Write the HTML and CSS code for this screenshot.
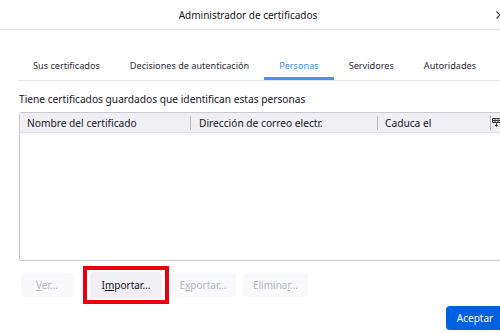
FILE: index.html
```html
<!DOCTYPE html>
<html lang="es">
<head>
<meta charset="utf-8">
<link rel="stylesheet" href="styles.css">
</head>
<body>
<div class="dialog">
  <header class="titlebar">
    <span class="title">Administrador de certificados</span>
    <svg class="close" width="8" height="8" viewBox="0 0 8 8"><path d="M0.5 0.5L7.5 7.5M7.5 0.5L0.5 7.5" stroke="#2b2a33" stroke-width="1.1" fill="none"/></svg>
  </header>
  <div class="content">
    <nav class="tabs">
      <span class="tab">Sus certificados</span>
      <span class="tab">Decisiones de autenticación</span>
      <span class="tab active">Personas</span>
      <span class="tab">Servidores</span>
      <span class="tab">Autoridades</span>
    </nav>
    <p class="desc">Tiene certificados guardados que identifican estas personas</p>
    <div class="table">
      <div class="thead">
        <div class="col c1">Nombre del certificado</div>
        <div class="col c2">Dirección de correo electr.</div>
        <div class="col c3">Caduca el</div>
        <div class="col c4">
          <svg width="9" height="9" viewBox="0 0 9 9"><path d="M0.5 0.5h8v4h-8z M0.5 2.5h8 M3 0.5v4 M6 0.5v4 M4.5 5v3.5 M3 7l1.5 1.5L6 7" fill="none" stroke="#3a3a40" stroke-width="1"/></svg>
        </div>
      </div>
      <div class="tbody"></div>
    </div>
    <div class="actions">
      <button class="btn disabled"><u>V</u>er...</button>
      <span class="highlight"><button class="btn"><span>I<u>m</u>portar...</span></button></span>
      <button class="btn disabled">E<u>x</u>portar...</button>
      <button class="btn disabled">Elimina<u>r</u>...</button>
    </div>
    <div class="footer">
      <button class="primary">Aceptar</button>
    </div>
  </div>
</div>
</body>
</html>
```

FILE: styles.css
```css
* { box-sizing: border-box; }
html, body {
  margin: 0;
  padding: 0;
  background: #fff;
  width: 500px;
  height: 333px;
  overflow: hidden;
}
body {
  font-family: "Noto Sans", "Open Sans", sans-serif;
  color: #15141a;
  font-size: 10.2px;
}
.dialog {
  width: 500px;
  overflow: hidden;
}
.titlebar {
  height: 30px;
  border-bottom: 1px solid #e2e2e6;
  display: flex;
  align-items: center;
  justify-content: center;
  position: relative;
  width: 500px;
}
.title {
  font-size: 10px;
  margin-left: -4px;
}
.close {
  position: absolute;
  left: 496px;
  top: 11px;
}
.content {
  padding-left: 18px;
}
.tabs {
  display: flex;
  margin-top: 26px;
  border-bottom: 1px solid #e6e6ea;
  height: 25px;
  white-space: nowrap;
  font-size: 9.15px;
}
.tab {
  flex-shrink: 0;
  padding: 0 15px;
  line-height: 20px;
  height: 24px;
  color: #2b2a33;
}
.tab.active {
  color: #3d8cf0;
  border-bottom: 3px solid #4a90f0;
}
.desc {
  margin: 11px 0 0 1px;
  line-height: 14px;
}
.table {
  margin-top: 6px;
  margin-left: 1px;
  border: 1px solid #c9c9cf;
  border-right: none;
  border-radius: 3px 0 0 3px;
  height: 149px;
}
.thead {
  display: flex;
  height: 20px;
  background: #f0f0f4;
  border-bottom: 1px solid #e0e0e6;
  align-items: center;
  white-space: nowrap;
  overflow: hidden;
}
.col {
  flex-shrink: 0;
  padding-left: 7px;
  line-height: 14px;
  border-right: 1px solid #b8b8bf;
  height: 14px;
}
.c1 { width: 171px; }
.c2 { width: 187px; padding-left: 8px; }
.c3 { width: 113px; padding-left: 7px; }
.c4 { border-right: none; padding-left: 1px; display: flex; align-items: center; }
.actions {
  display: flex;
  align-items: center;
  margin-top: 3px;
  height: 41px;
  padding-left: 3px;
}
.btn {
  font-family: inherit;
  font-size: 10px;
  border: none;
  border-radius: 4px;
  height: 24px;
  padding: 0;
  background: #f0f0f4;
  color: #15141a;
}
.btn.disabled {
  background: #f9f9fb;
  color: #b4b4bb;
}
.actions > .btn:nth-child(1) { width: 52px; margin-right: 10px; }
.highlight {
  border: 4px solid #e8000e;
  width: 86px;
  height: 38px;
  display: flex;
  align-items: center;
  justify-content: center;
  margin-right: 1px;
}
.highlight .btn { width: 72px; height: 26px; }
.actions > .btn:nth-child(3) { width: 66px; margin-right: 7px; }
.actions > .btn:nth-child(4) { width: 65px; }
.footer {
  display: flex;
  justify-content: flex-end;
  width: 482px;
  margin-top: 1px;
}
.primary {
  font-family: inherit;
  font-size: 10px;
  border: none;
  border-radius: 4px 0 0 4px;
  background: #0061e0;
  color: #fff;
  width: 54px;
  height: 24px;
  padding: 0 0 0 4px;
}
```
